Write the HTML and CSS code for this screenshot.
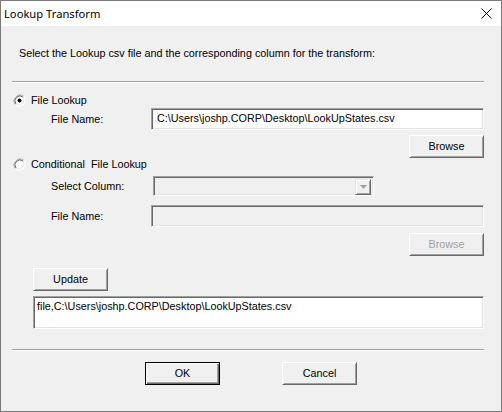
FILE: index.html
```html
<!DOCTYPE html>
<html>
<head>
<meta charset="utf-8">
<title>Lookup Transform</title>
<link rel="stylesheet" href="styles.css">
</head>
<body>
<div class="window">
  <div class="titlebar">
    <span class="title">Lookup Transform</span>
    <svg class="close" width="11" height="11" viewBox="0 0 11 11"><path d="M0.5 0.5 L10.5 10.5 M10.5 0.5 L0.5 10.5" stroke="#000" stroke-width="1" fill="none"/></svg>
  </div>
  <div class="content">
    <div class="intro">Select the Lookup csv file and the corresponding column for the transform:</div>
    <div class="sep sep1"></div>

    <div class="radio-row r1">
      <svg class="radio" width="13" height="13" viewBox="0 0 13 13">
        <circle cx="6.5" cy="6.5" r="6" fill="#fff"/>
        <path d="M2.3 10.7 A6 6 0 0 1 10.7 2.3" stroke="#a0a0a0" fill="none"/>
        <path d="M3 10 A5 5 0 0 1 10 3" stroke="#696969" fill="none"/>
        <path d="M10.7 2.3 A6 6 0 0 1 2.3 10.7" stroke="#ffffff" fill="none"/>
        <path d="M10 3 A5 5 0 0 1 3 10" stroke="#e3e3e3" fill="none"/>
        <circle cx="6.5" cy="6.5" r="2" fill="#000"/>
      </svg>
      <span>File Lookup</span>
    </div>
    <div class="field-row f1">
      <span class="lbl">File Name:</span>
      <div class="edit">C:\Users\joshp.CORP\Desktop\LookUpStates.csv</div>
    </div>
    <div class="btn-row b1"><button class="btn">Browse</button></div>

    <div class="radio-row r2">
      <svg class="radio" width="13" height="13" viewBox="0 0 13 13">
        <circle cx="6.5" cy="6.5" r="6" fill="#fff"/>
        <path d="M2.3 10.7 A6 6 0 0 1 10.7 2.3" stroke="#a0a0a0" fill="none"/>
        <path d="M3 10 A5 5 0 0 1 10 3" stroke="#696969" fill="none"/>
        <path d="M10.7 2.3 A6 6 0 0 1 2.3 10.7" stroke="#ffffff" fill="none"/>
        <path d="M10 3 A5 5 0 0 1 3 10" stroke="#e3e3e3" fill="none"/>
      </svg>
      <span>Conditional&nbsp; File Lookup</span>
    </div>
    <div class="field-row f2">
      <span class="lbl">Select Column:</span>
      <div class="combo">
        <span class="combo-btn">
          <svg width="7" height="4" viewBox="0 0 7 4"><path d="M0 0 H7 L3.5 4 Z" fill="#a0a0a0"/></svg>
        </span>
      </div>
    </div>
    <div class="field-row f3">
      <span class="lbl">File Name:</span>
      <div class="edit disabled"></div>
    </div>
    <div class="btn-row b2"><button class="btn" disabled>Browse</button></div>

    <div class="update-row"><button class="btn">Update</button></div>
    <div class="memo">file,C:\Users\joshp.CORP\Desktop\LookUpStates.csv</div>

    <div class="sep sep2"></div>
    <div class="footer">
      <button class="btn default">OK</button>
      <button class="btn">Cancel</button>
    </div>
  </div>
</div>
</body>
</html>
```

FILE: styles.css
```css
* { box-sizing: border-box; }

html, body {
  margin: 0;
  padding: 0;
  background: #f0f0f0;
}

.window {
  width: 502px;
  height: 412px;
  border: 1px solid #7a7a7a;
  background: #f0f0f0;
  display: flex;
  flex-direction: column;
  font-family: "Liberation Sans", Arial, sans-serif;
  font-size: 10.8px;
  color: #000;
}

.titlebar {
  height: 25px;
  flex: none;
  background: #fff;
  display: flex;
  align-items: center;
  justify-content: space-between;
  padding: 0 9px 0 3px;
}

.title {
  font-family: "Noto Sans", "Open Sans", sans-serif;
  font-size: 11.2px;
  line-height: 25px;
  color: #000;
}

.close {
  display: block;
}

.content {
  padding: 0 17px 0 11px;
  display: flex;
  flex-direction: column;
}

.intro {
  margin-top: 20px;
  height: 14px;
  line-height: 14px;
  padding-left: 7px;
  white-space: nowrap;
}

.sep {
  height: 2px;
  border-top: 1px solid #a0a0a0;
  border-bottom: 1px solid #ffffff;
}

.sep1 { margin-top: 21px; }
.sep2 { margin-top: 20px; }

.radio-row {
  height: 13px;
  display: flex;
  align-items: center;
  gap: 5px;
  padding-left: 1px;
  line-height: 13px;
  white-space: nowrap;
}

.radio { display: block; flex: none; }

.r1 { margin-top: 11px; }
.r2 { margin-top: 0; }

.field-row {
  display: grid;
  grid-template-columns: 139px 1fr;
  align-items: center;
}

.lbl {
  padding-left: 39px;
  white-space: nowrap;
}

.f1 { margin-top: 1px; }
.f2 { margin-top: 5px; }
.f3 { margin-top: 9px; }

.edit {
  height: 22px;
  background: #fff;
  border: 1px solid;
  border-color: #a0a0a0 #ffffff #ffffff #a0a0a0;
  box-shadow: inset 1px 1px 0 #696969, inset -1px -1px 0 #e3e3e3;
  padding: 0 0 0 5px;
  line-height: 19px;
  white-space: nowrap;
  overflow: hidden;
}

.edit.disabled {
  background: #f0f0f0;
}

.combo {
  margin-left: 2px;
  width: 221px;
  height: 20px;
  background: #f0f0f0;
  border: 1px solid;
  border-color: #a0a0a0 #ffffff #ffffff #a0a0a0;
  box-shadow: inset 1px 1px 0 #696969, inset -1px -1px 0 #e3e3e3;
  display: flex;
  justify-content: flex-end;
  padding: 2px;
}

.combo-btn {
  width: 16px;
  height: 16px;
  background: #f0f0f0;
  border: 1px solid;
  border-color: #e3e3e3 #696969 #696969 #e3e3e3;
  box-shadow: inset 1px 1px 0 #ffffff, inset -1px -1px 0 #a0a0a0;
  display: flex;
  align-items: center;
  justify-content: center;
}

.combo-btn svg { display: block; }

.btn-row {
  display: flex;
  justify-content: flex-end;
}

.b1 { margin-top: 5px; }
.b2 { margin-top: 6px; }

.btn {
  width: 75px;
  height: 23px;
  margin: 0;
  padding: 0;
  font-family: "Liberation Sans", Arial, sans-serif;
  font-size: 10.8px;
  color: #000;
  background: #f0f0f0;
  border: 1px solid;
  border-color: #ffffff #696969 #696969 #ffffff;
  box-shadow: inset 1px 1px 0 #f0f0f0, inset -1px -1px 0 #a0a0a0;
  border-radius: 0;
  line-height: 19px;
}

.btn:disabled {
  color: #a0a0a0;
}

.btn.default {
  border: 1px solid #000;
  box-shadow: inset 1px 1px 0 #ffffff, inset -1px -1px 0 #696969, inset -2px -2px 0 #a0a0a0;
}

.update-row {
  margin-top: 12px;
  padding-left: 21px;
  display: flex;
}

.memo {
  margin-top: 5px;
  margin-left: 21px;
  height: 33px;
  background: #fff;
  border: 1px solid;
  border-color: #a0a0a0 #ffffff #ffffff #a0a0a0;
  box-shadow: inset 1px 1px 0 #696969, inset -1px -1px 0 #e3e3e3;
  padding: 3px 0 0 3px;
  line-height: 13px;
  white-space: nowrap;
}

.footer {
  margin-top: 11px;
  display: flex;
  padding-left: 133px;
  gap: 62px;
}
```
